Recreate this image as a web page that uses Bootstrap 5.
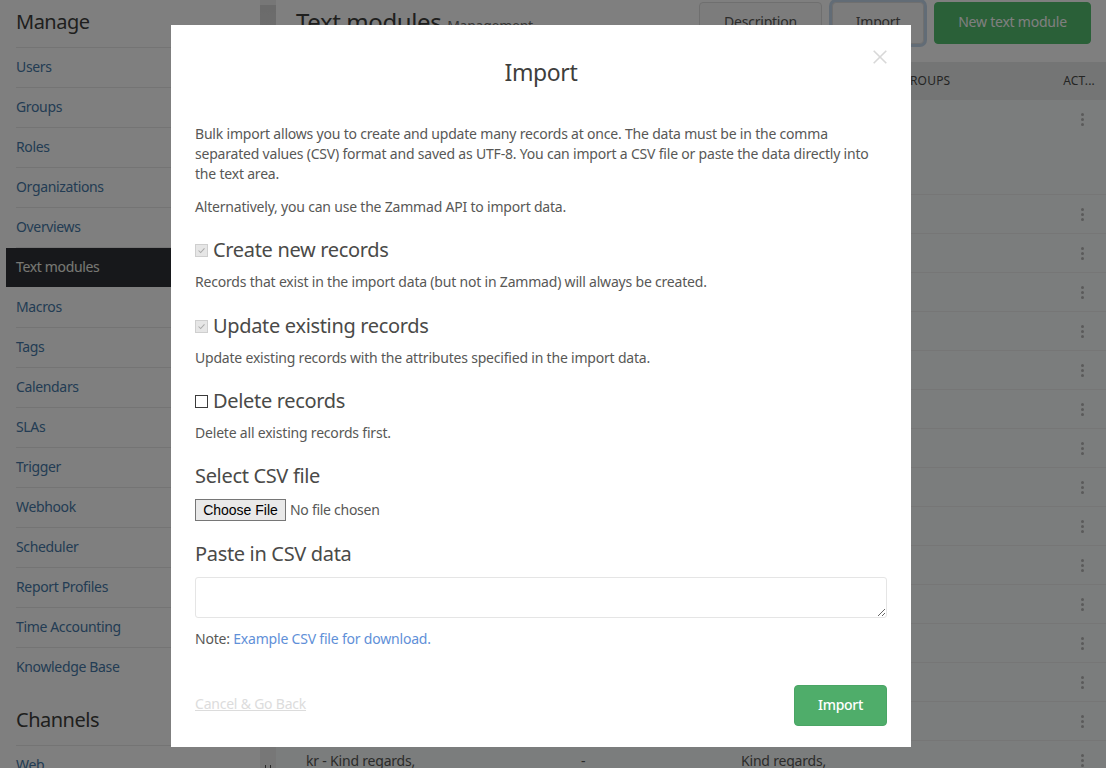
<!DOCTYPE html>
<html lang="en">
<head>
    <meta charset="UTF-8">
    <meta name="viewport" content="width=device-width, initial-scale=1.0">
    <title>Text modules</title>
    <link rel="stylesheet" href="https://cdn.jsdelivr.net/npm/bootstrap@5.3.0/dist/css/bootstrap.min.css">
    <style>
        html, body { height: 100%; overflow: hidden; }
        body { font-family: "Noto Sans", sans-serif; font-size: 14px; letter-spacing: -.2px; color: #585856; background: #fff; }
        .app { height: 768px; overflow: hidden; }
        .sidebar { width: 260px; flex: none; padding: 0 0 0 6px; background: #fff; letter-spacing: -.35px; }
        .sidebar h2 { font-size: 20px; font-weight: 400; letter-spacing: -.5px; color: #3e3e3c; margin: 0 0 0 10px; height: 48px; line-height: 44px; border-bottom: 1px solid #e8e8e8; }
        .sidebar h2.later { margin-top: 13px; height: 45px; line-height: 38px; }
        .sidebar a { display: block; height: 40px; padding-left: 10px; color: #4679a8; text-decoration: none; }
        .sidebar a span { display: block; line-height: 37px; padding-bottom: 2px; border-bottom: 1px solid #e8e8e8; }
        .sidebar a.active { background: #2e3036; color: #f0f0e8; height: 39px; margin-bottom: 1px; }
        .sidebar a.active span, .sidebar a.last span { border: 0; }
        .rail { width: 16px; flex: none; background: #eeeeee; position: relative; }
        .rail .thumb { position: absolute; left: 0; right: 0; top: 5px; height: 120px; background: linear-gradient(#d6d6d6, #eeeeee); }
        .rail .grip { position: absolute; left: 5px; top: 765px; width: 6px; height: 3px; border-left: 1px solid #555; border-right: 1px solid #555; }
        .main { flex: 1; min-width: 0; background: #fff; }
        .page-head { height: 62px; padding: 2px 15px 0 20px; }
        .page-head h1 { font-size: 24px; font-weight: 400; letter-spacing: -.4px; color: #3e3e3c; margin: 6px 0 0; }
        .page-head small { font-size: 14px; letter-spacing: -.25px; color: #6c6c6a; }
        .page-head .btn { height: 42px; padding-bottom: 10px; font-size: 14px; border-radius: 4px; letter-spacing: -.22px; }
        .btn-plain { width: 123px; background: #f9f9f9; border: 1px solid #dfdfdf; color: #585856; }
        .btn-focus { width: 92px; background: #f9f9f9; border: 1px solid #dfdfdf; color: #585856; box-shadow: 0 0 0 3px #c5d9ec; }
        .btn-new { width: 157px; background: #55c070; border-color: #55c070; color: #fff; }
        .table-head { height: 38px; background: #e8ebeb; font-size: 12px; letter-spacing: .2px; color: #4a4a48; padding-left: 625px; padding-right: 11px; }
        .data-row { height: 39px; border-bottom: 1px solid #ececec; background: #f7fafa; padding: 0 22px 0 30px; }
        .data-row.first { height: 95px; padding-bottom: 55px; }
        .dots { width: 3px; margin-left: auto; display: grid; gap: 2px; }
        .dots i { display: block; width: 3px; height: 3px; border-radius: 50%; background: #b4b4b4; }
        .kr-name { width: 275px; }
        .kr-dash { width: 160px; }

        .modal-backdrop { opacity: .5; }
        .import-dialog { width: 740px; max-width: 740px; margin: 25px 0 0 171px; }
        .import-dialog .modal-content { height: 722px; border: 0; border-radius: 0; padding: 0 24px; color: #585856; }
        .import-dialog .modal-header { display: block; border: 0; padding: 0; height: 91px; text-align: center; position: relative; }
        .import-dialog .modal-title { font-size: 23px; font-weight: 400; letter-spacing: -.4px; line-height: 32px; padding-top: 31px; color: #3e3e3c; }
        .close-x { position: absolute; right: 0; top: 25px; width: 14px; height: 14px; background: none; border: 0; padding: 0; }
        .close-x svg { display: block; }
        .import-dialog p { margin: 0; line-height: 20px; }
        .import-dialog h3 { font-size: 20px; font-weight: 400; letter-spacing: -.33px; line-height: 26px; margin: 0; color: #4a4a48; }
        .intro-b { margin-top: 13px !important; }
        .check-title { gap: 5px; margin-top: 20px; }
        .check-title.update { margin-top: 21px; }
        .check-title + p { margin-top: 9px; }
        .check-title input { appearance: none; width: 13px; height: 13px; margin: 0; border: 1px solid #3b3b3b; background: #fff; flex: none; }
        .check-title input:disabled { border-color: #cfcfcf; background: #e6e6e6 url("data:image/svg+xml,%3Csvg xmlns='http://www.w3.org/2000/svg' viewBox='0 0 13 13'%3E%3Cpath d='M3 6.5l2.5 2.5L10 4' fill='none' stroke='%23aaa' stroke-width='1.2'/%3E%3C/svg%3E") center/contain no-repeat; }
        .sect { margin-top: 20px !important; }
        .file-input { display: block; margin-top: 10px; font-size: 14px; letter-spacing: -.28px; color: #585856; }
        .file-input::file-selector-button { font-family: "Liberation Sans", sans-serif; font-size: 14px; letter-spacing: 0; height: 22px; width: 91px; padding: 0; background: #e9e9e9; border: 1px solid #767676; border-radius: 0; color: #000; margin-right: 4px; }
        .import-dialog textarea { height: 41px; margin-top: 10px; border: 1px solid #e5e5e5; border-radius: 3px; display: block; }
        .note { margin-top: 11px !important; }
        .import-dialog a.dl { color: #5f90d8; text-decoration: none; }
        .cancel { color: #dcdcdc; margin-bottom: 5px; letter-spacing: -.22px; }
        .footer-row { padding-bottom: 21px; }
        .btn-import { width: 93px; height: 41px; padding-bottom: 8px; background: #4fad6a; border: 1px solid #4aa565; color: #fff; font-size: 14px; border-radius: 4px; font-weight: 500; letter-spacing: -.3px; }
    </style>
</head>
<body>
    <div class="app d-flex">
        <nav class="sidebar">
            <h2>Manage</h2>
            <a href="#"><span>Users</span></a>
            <a href="#"><span>Groups</span></a>
            <a href="#"><span>Roles</span></a>
            <a href="#"><span>Organizations</span></a>
            <a href="#"><span>Overviews</span></a>
            <a href="#" class="active"><span>Text modules</span></a>
            <a href="#"><span>Macros</span></a>
            <a href="#"><span>Tags</span></a>
            <a href="#"><span>Calendars</span></a>
            <a href="#"><span>SLAs</span></a>
            <a href="#"><span>Trigger</span></a>
            <a href="#"><span>Webhook</span></a>
            <a href="#"><span>Scheduler</span></a>
            <a href="#"><span>Report Profiles</span></a>
            <a href="#"><span>Time Accounting</span></a>
            <a href="#" class="last"><span>Knowledge Base</span></a>
            <h2 class="later">Channels</h2>
            <a href="#"><span>Web</span></a>
        </nav>
        <div class="rail"><div class="thumb"></div><div class="grip"></div></div>
        <main class="main">
            <div class="page-head d-flex align-items-start">
                <h1>Text modules <small>Management</small></h1>
                <div class="ms-auto d-flex" style="gap:10px">
                    <button class="btn btn-plain">Description</button>
                    <button class="btn btn-focus">Import</button>
                    <button class="btn btn-new">New text module</button>
                </div>
            </div>
            <div class="table-head d-flex align-items-center justify-content-between">
                <span>GROUPS</span><span>ACT...</span>
            </div>
            <div id="rows"></div>
        </main>
    </div>

    <div class="modal-backdrop"></div>
    <div class="modal d-block" tabindex="-1">
        <div class="modal-dialog import-dialog">
            <div class="modal-content">
                <div class="modal-header">
                    <h2 class="modal-title">Import</h2>
                    <button class="close-x" aria-label="Close">
                        <svg width="14" height="14" viewBox="0 0 14 14"><path d="M.7.7l12.6 12.6M13.3.7L.7 13.3" stroke="#d8d8d8" stroke-width="1.6" fill="none"/></svg>
                    </button>
                </div>
                <p class="mt-2">Bulk import allows you to create and update many records at once. The data must be in the comma separated values (CSV) format and saved as UTF-8. You can import a CSV file or paste the data directly into the text area.</p>
                <p class="intro-b">Alternatively, you can use the Zammad API to import data.</p>

                <div class="check-title d-flex align-items-center"><input type="checkbox" checked disabled><h3>Create new records</h3></div>
                <p>Records that exist in the import data (but not in Zammad) will always be created.</p>

                <div class="check-title update d-flex align-items-center"><input type="checkbox" checked disabled><h3>Update existing records</h3></div>
                <p>Update existing records with the attributes specified in the import data.</p>

                <div class="check-title d-flex align-items-center"><input type="checkbox"><h3>Delete records</h3></div>
                <p>Delete all existing records first.</p>

                <h3 class="sect">Select CSV file</h3>
                <input type="file" class="file-input">

                <h3 class="sect">Paste in CSV data</h3>
                <textarea class="form-control"></textarea>
                <p class="note">Note: <a href="#" class="dl">Example CSV file for download.</a></p>

                <div class="footer-row d-flex align-items-center justify-content-between mt-auto">
                    <a href="#" class="cancel">Cancel &amp; Go Back</a>
                    <button class="btn btn-import">Import</button>
                </div>
            </div>
        </div>
    </div>

    <script src="https://cdn.jsdelivr.net/npm/bootstrap@5.3.0/dist/js/bootstrap.bundle.min.js"></script>
    <script>
        // table rows behind the modal, only the dots and the last row show
        var rows = document.getElementById('rows');
        for (var i = 0; i < 16; i++) {
            var extra = '';
            if (i === 15) extra = '<span class="kr-name">kr - Kind regards,</span><span class="kr-dash">-</span><span>Kind regards,</span>';
            rows.innerHTML += '<div class="data-row d-flex align-items-center' + (i === 0 ? ' first' : '') + '">' + extra +
                '<div class="dots"><i></i><i></i><i></i></div></div>';
        }
    </script>
</body>
</html>
